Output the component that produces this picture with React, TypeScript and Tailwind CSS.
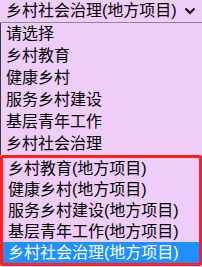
import React from "react";

const plain = ["请选择", "乡村教育", "健康乡村", "服务乡村建设", "基层青年工作", "乡村社会治理"];
const local = ["乡村教育(地方项目)", "健康乡村(地方项目)", "服务乡村建设(地方项目)", "基层青年工作(地方项目)", "乡村社会治理(地方项目)"];

export default function App() {
  return (
    <div
      className="w-[202px] h-[267px] overflow-hidden bg-[#efcdf9] text-[16px] text-black"
      style={{ fontFamily: '"Liberation Sans", "Noto Sans CJK SC", sans-serif' }}
    >
      <div className="h-[23px] flex items-center justify-between pl-[6px] pr-[6px] border-b border-[#8a8a8a] leading-[22px]">
        <span className="whitespace-nowrap">乡村社会治理(地方项目)</span>
        <svg width="12" height="8" viewBox="0 0 12 8" className="shrink-0">
          <path d="M1.5 1.5 L6 6 L10.5 1.5" fill="none" stroke="#111" strokeWidth="2.2" />
        </svg>
      </div>
      <div className="border-l border-[#3a3a3a]">
        {plain.map((t) => (
          <div key={t} className="h-[22px] leading-[22px] pl-[5px] whitespace-nowrap">
            {t}
          </div>
        ))}
      </div>
      <div className="border-[3px] border-[#ff1f1f] rounded-[2px]">
        {local.map((t, i) => (
          <div
            key={t}
            className={
              "h-[21px] leading-[21px] pl-[5px] whitespace-nowrap " +
              (i === local.length - 1 ? "bg-[#1e90ff] text-white" : "")
            }
          >
            {t}
          </div>
        ))}
      </div>
    </div>
  );
}
